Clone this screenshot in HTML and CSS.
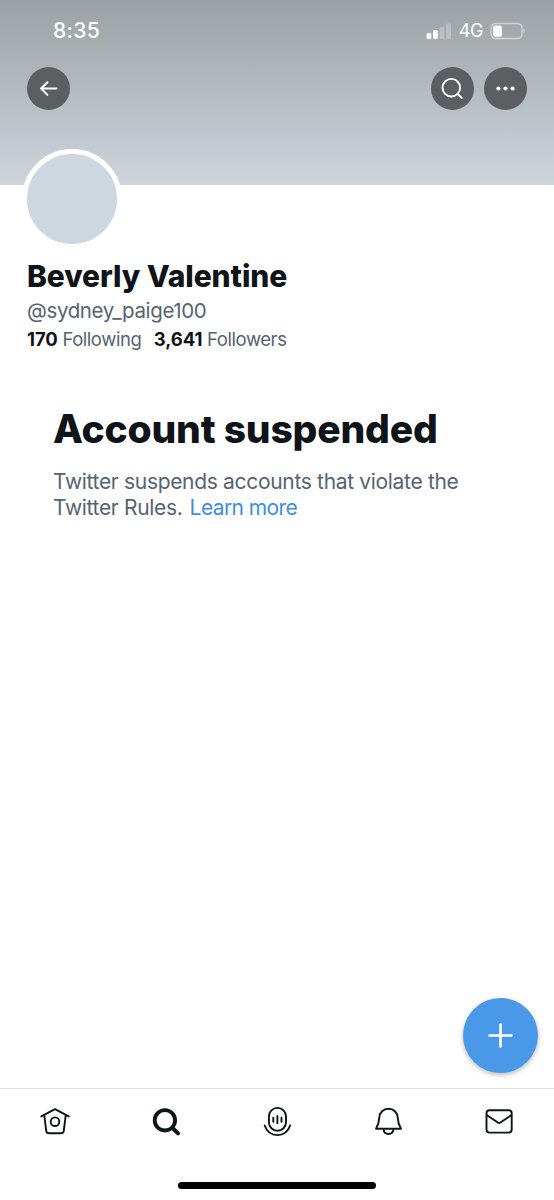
FILE: index.html
```html
<!DOCTYPE html>
<html lang="en">
<head>
<meta charset="utf-8">
<title>Beverly Valentine</title>
<link rel="stylesheet" href="styles.css">
</head>
<body>
<div class="screen">
  <header class="banner">
    <div class="status">
      <span class="clock">8:35</span>
      <div class="indicators">
        <svg width="26" height="18" viewBox="0 0 26 18"><g fill="#fff"><rect x="0.500" y="11" width="4.800" height="6" rx="1.500"/><rect x="7" y="8" width="4.800" height="9" rx="1.500"/><rect x="13.600" y="5" width="4.800" height="12" rx="1.500" opacity=".25"/><rect x="20.200" y="1.500" width="4.800" height="15.500" rx="1.500" opacity=".25"/></g></svg>
        <span class="network">4G</span>
        <svg width="36" height="18" viewBox="0 0 36 18"><rect x="1" y="1.500" width="31" height="15" rx="4.500" fill="none" stroke="#fff" stroke-opacity=".5" stroke-width="1.300"/><rect x="3" y="3.500" width="9" height="11.200" rx="2.500" fill="#fff"/><path d="M33.500 6.500v5c1.600-.6 1.600-4.400 0-5z" fill="#fff" fill-opacity=".55"/></svg>
      </div>
    </div>
    <div class="actions">
      <button class="round" aria-label="Back"><svg width="43" height="43" viewBox="0 0 43 43"><path d="M29.500 21.500H14M20.500 15.200L14 21.500l6.500 6.400"/></svg></button>
      <button class="round push" aria-label="Search"><svg width="43" height="43" viewBox="0 0 43 43"><circle cx="20.300" cy="20.700" r="8.800"/><path d="M26.600 26.800l4.200 4.200"/></svg></button>
      <button class="round" aria-label="More"><svg width="43" height="43" viewBox="0 0 43 43"><g fill="#fff" stroke="none"><circle cx="14.400" cy="21.500" r="2.100"/><circle cx="21.500" cy="21.500" r="2.100"/><circle cx="28.600" cy="21.500" r="2.100"/></g></svg></button>
    </div>
  </header>
  <section class="profile">
    <div class="avatar"></div>
    <h1 class="name">Beverly Valentine</h1>
    <p class="handle">@sydney_paige100</p>
    <p class="stats"><span><b>170</b> Following</span><span><b>3,641</b> Followers</span></p>
  </section>
  <main class="notice">
    <h2 class="title">Account suspended</h2>
    <p class="body">Twitter suspends accounts that violate the<br>Twitter Rules. <a class="link">Learn more</a></p>
  </main>
  <button class="compose" aria-label="Compose"><svg width="75" height="75" viewBox="0 0 75 75"><path d="M26.500 37.500h22M37.500 26.500v22" stroke="#fff" stroke-width="2.600" stroke-linecap="round"/></svg></button>
  <nav class="tabs">
    <svg class="tab" viewBox="0 0 36 36"><path d="M4.300 12.400L18 5.200l13.700 7.200M7.300 11.300l1.900 15.300a3 3 0 0 0 3 2.700h11.600a3 3 0 0 0 3-2.700l1.900-15.300"/><circle cx="18" cy="17.700" r="4.300"/></svg>
    <svg class="tab" viewBox="0 0 36 36"><circle cx="16.900" cy="16.300" r="10.200" stroke-width="3.800"/><path d="M24.500 24l5.500 5.400" stroke-width="4"/></svg>
    <svg class="tab" viewBox="0 0 36 36"><rect x="9.900" y="3.900" width="17.100" height="22.800" rx="8.500"/><path d="M5.700 21.500c2 5.900 6.900 9.600 12.700 9.600s10.700-3.700 12.700-9.600"/><path d="M14.300 13.700v4M18.400 12v7.300M22.500 13.700v4"/></svg>
    <svg class="tab" viewBox="0 0 36 36"><path d="M6 24.800c2.200-3.500 3-6.300 3.300-11.200.3-5.200 4-8.900 9.200-8.900s8.900 3.700 9.200 8.900c.3 4.900 1.100 7.700 3.300 11.200zM13.500 25.200c.3 3 2.300 4.800 5 4.800s4.700-1.800 5-4.800"/></svg>
    <svg class="tab" viewBox="0 0 36 36"><rect x="5.500" y="6.300" width="25.200" height="22.300" rx="3"/><path d="M6 11.200l10.800 7.300c.9.600 1.700.6 2.600 0l10.900-7.300"/></svg>
  </nav>
  <div class="home-indicator"></div>
</div>
</body>
</html>
```
FILE: styles.css
```css
* { box-sizing: border-box; margin: 0; padding: 0; }
body { background: #fff; font-family: Inter, "Liberation Sans", sans-serif; color: #0f1419; }
button { border: 0; font: inherit; }
svg { display: block; fill: none; }
.screen { position: relative; display: flex; flex-direction: column; width: 554px; height: 1200px; overflow: hidden; background: #fff; }
.banner { flex: none; height: 185px; background: linear-gradient(#9ca1a5 0, #aaafb2 28%, #b6bec1 54%, #c1c8cf 75%, #ced6dc 100%); }
.status { display: flex; justify-content: space-between; height: 61px; line-height: 61px; padding: 0 28px 0 53px; color: #fff; }
.clock { font-size: 21px; font-weight: 500; letter-spacing: .3px; }
.indicators { display: flex; align-items: center; }
.network { margin: 0 7px 0 6.500px; font-size: 18px; letter-spacing: -.4px; }
.actions { display: flex; gap: 10.5px; padding: 6px 27px 0; }
.round { width: 43px; height: 43px; border-radius: 50%; background: #5b5f62; }
.round svg { stroke: #fff; stroke-width: 1.9; stroke-linecap: round; stroke-linejoin: round; }
.push { margin-left: auto; }
.profile { flex: none; padding: 0 27px; }
.avatar { width: 100px; height: 100px; margin: -36px 0 0 -5px; border: 5px solid #fff; border-radius: 50%; background: #cfd7de; position: relative; }
.name { margin-top: 9px; font-size: 30px; line-height: 36px; font-weight: 800; letter-spacing: -.1px; white-space: nowrap; }
.handle { margin-top: 3px; font-size: 20.5px; line-height: 28px; letter-spacing: -.36px; color: #566370; }
.stats { display: flex; gap: 12.5px; margin-top: 2px; font-size: 18.5px; line-height: 24px; letter-spacing: -.44px; color: #566370; white-space: nowrap; }
.stats b { font-weight: 700; letter-spacing: -.1px; color: #0f1419; }
.notice { flex: 1; padding: 54px 53px 0; }
.title { font-size: 39px; line-height: 48px; font-weight: 800; letter-spacing: -.2px; white-space: nowrap; }
.body { margin-top: 16px; font-size: 21px; line-height: 25.5px; letter-spacing: -.32px; color: #566370; white-space: nowrap; }
.link { margin-left: 1.5px; letter-spacing: -.6px; color: #3f8edb; }
.compose { position: absolute; right: 16px; bottom: 127px; width: 75px; height: 75px; border-radius: 50%; background: #4a99e9; box-shadow: 0 2px 5px rgba(0, 0, 0, .28); }
.tabs { flex: none; display: flex; justify-content: space-around; height: 94px; padding-top: 15px; border-top: 1px solid #e1e4e6; }
.tab { width: 36px; height: 36px; stroke: #0f1419; stroke-width: 1.9; stroke-linecap: round; stroke-linejoin: round; }
.home-indicator { flex: none; align-self: center; width: 198px; height: 7px; margin-bottom: 11px; border-radius: 4px; background: #000; }
```
